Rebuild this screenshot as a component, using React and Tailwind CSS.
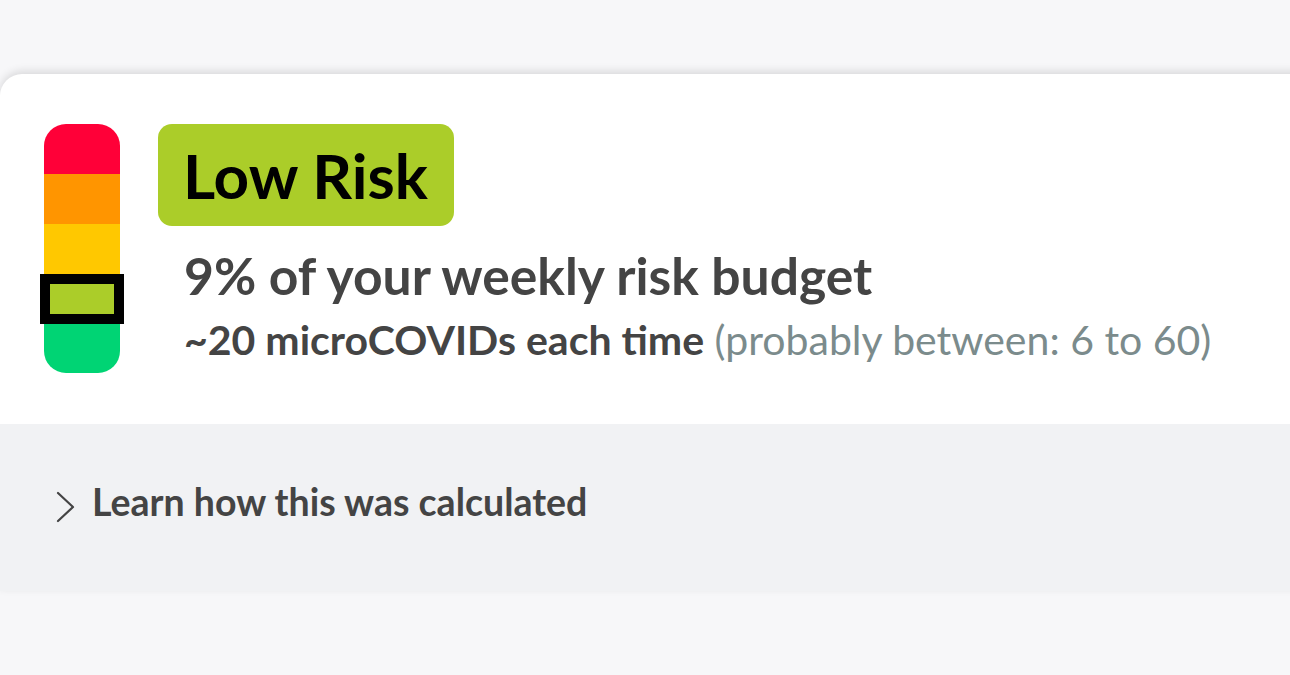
export default function App() {
  return (
    <div
      className="min-h-screen bg-[#f7f7f9] pt-[74px]"
      style={{ fontFamily: "Lato, 'Noto Sans', sans-serif" }}
    >
      <div className="w-[1320px] rounded-tl-[22px] rounded-tr-[22px] bg-white shadow-[0_-3px_8px_rgba(0,0,0,0.12)]">
        <div className="flex h-[350px] pl-[44px] pt-[50px]">
          <div className="relative flex h-[249px] w-[76px] flex-col">
            <div className="h-[50px] rounded-t-[22px] bg-[#ff0038]" />
            <div className="h-[50px] bg-[#ff9500]" />
            <div className="h-[50px] bg-[#ffc800]" />
            <div className="h-[50px] bg-[#abcd29]" />
            <div className="h-[49px] rounded-b-[22px] bg-[#00d474]" />
            <div className="absolute left-[-4px] top-[150px] h-[50px] w-[84px] border-[10px] border-black" />
          </div>
          <div className="ml-[38px] flex flex-col">
            <div className="flex h-[102px] w-[296px] items-center rounded-[14px] bg-[#abcd29] pl-[25px]">
              <span className="text-[62px] font-bold leading-none text-black">
                Low Risk
              </span>
            </div>
            <div className="ml-[26px] mt-[21px] whitespace-nowrap text-[51.6px] font-bold leading-[56px] text-[#444444]">
              9% of your weekly risk budget
            </div>
            <div className="ml-[26px] mt-[15px] whitespace-nowrap text-[41px] leading-[44px]">
              <span className="font-bold text-[#444444]">~20 microCOVIDs each time</span>{" "}
              <span className="text-[#7b8b8c]">(probably between: 6 to 60)</span>
            </div>
          </div>
        </div>
        <div className="flex h-[167px] items-start bg-[#f1f2f4] pl-[56px] pt-[55px]">
          <svg width="20" height="32" viewBox="0 0 20 32" fill="none" className="mt-[12px] shrink-0">
            <path d="M2 2 L17 16 L2 30" stroke="#444444" strokeWidth="2.2" strokeLinecap="round" strokeLinejoin="round" />
          </svg>
          <span className="ml-[16px] whitespace-nowrap text-[37.5px] font-bold leading-[46px] text-[#444444]">
            Learn how this was calculated
          </span>
        </div>
      </div>
    </div>
  );
}
